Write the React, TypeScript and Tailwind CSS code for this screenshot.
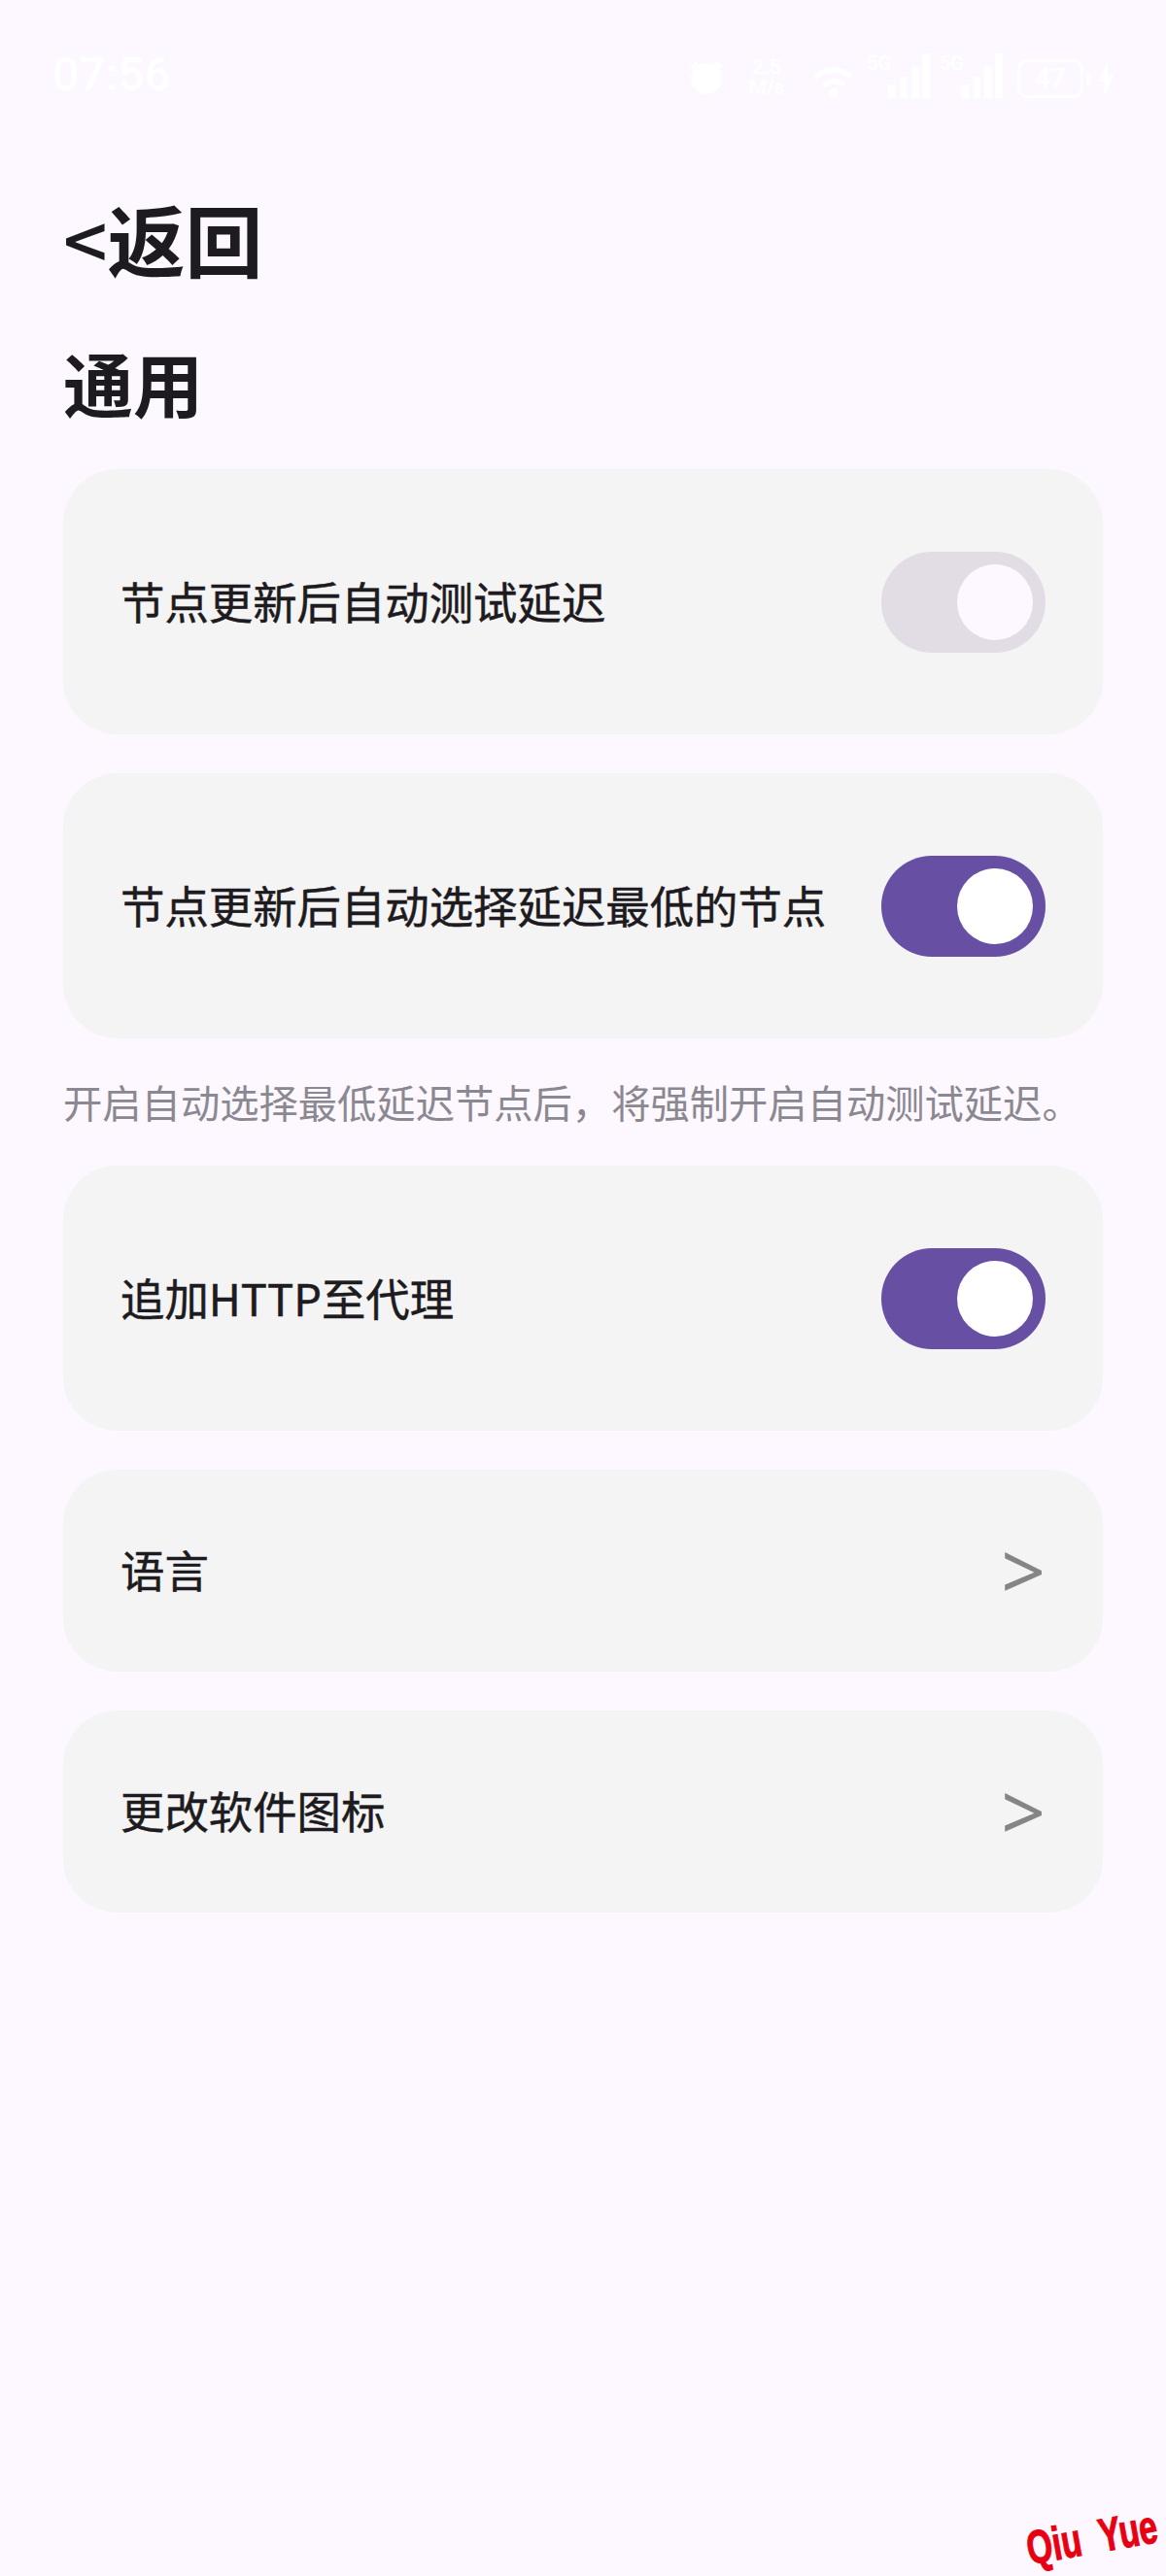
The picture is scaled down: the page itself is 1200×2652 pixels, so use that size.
import { useState } from "react"

const FONT = "font-['Noto_Sans_CJK_SC','Noto_Sans',sans-serif]"
const ROW_TEXT = "text-[45.4px] leading-none text-[#1d1b20] [-webkit-text-stroke:0.5px_#1d1b20]"

const Toggle = ({ on }: { on: boolean }) => (
  <div
    className={`flex h-[104px] w-[169px] shrink-0 items-center justify-end rounded-full pr-[13px] ${on ? "bg-[#6750a4]" : "bg-[#e2dce4]"}`}
  >
    <div className={`h-[78px] w-[78px] rounded-full ${on ? "bg-white" : "bg-[#fdf7ff]"}`} />
  </div>
)

const SwitchRow = ({ label, initial }: { label: string; initial: boolean }) => {
  const [on, setOn] = useState(initial)
  return (
    <div
      className="flex h-[273px] items-center justify-between rounded-[56px] bg-[#f4f4f4] pl-[59px] pr-[59px]"
      onClick={() => setOn(!on)}
    >
      <span className={`${ROW_TEXT} mb-[2px]`}>{label}</span>
      <Toggle on={on} />
    </div>
  )
}

const LinkRow = ({ label }: { label: string }) => (
  <div className="flex h-[208px] items-center justify-between rounded-[56px] bg-[#f4f4f4] pl-[59px] pr-[59px]">
    <span className={`${ROW_TEXT} mb-[3px]`}>{label}</span>
    <span className="mb-[2px] font-['Noto_Sans',sans-serif] text-[80px] leading-none text-[#858585]">&gt;</span>
  </div>
)

const StatusBar = () => (
  <div className="flex h-[101px] items-end justify-between pl-[54px] pr-[50px] text-white">
    <span className="font-['Roboto',sans-serif] text-[48px] font-medium leading-none">07:56</span>
    <div className="flex items-end">
      {/* alarm */}
      <svg width="38" height="42" viewBox="0 0 40 40" fill="currentColor">
        <circle cx="20" cy="21" r="17" />
        <path d="M2 8 9 2l3 3-7 6zM38 8l-7-6-3 3 7 6z" />
      </svg>
      <span className="ml-[20px] flex w-[46px] flex-col text-center font-['Roboto',sans-serif] text-[21px] font-bold leading-[21px]">
        <span>2.5</span>
        <span>M/s</span>
      </span>
      {/* wifi */}
      <svg className="ml-[25px]" width="42" height="36" viewBox="0 0 44 36" fill="none" stroke="currentColor" strokeWidth="6">
        <path d="M3 14a28 28 0 0 1 38 0M11 23a17 17 0 0 1 22 0" />
        <circle cx="22" cy="31" r="2" fill="currentColor" />
      </svg>
      {/* two sim signal blocks */}
      {["ml-[13px]", "ml-[10px]"].map((margin) => (
        <div key={margin} className={`relative h-[46px] w-[65px] ${margin}`}>
          <span className="absolute left-0 top-0 font-['Roboto',sans-serif] text-[20px] font-bold leading-none">5G</span>
          <svg className="absolute bottom-0 left-0" width="65" height="46" viewBox="0 0 65 46" fill="currentColor">
            <rect x="22" y="32" width="8" height="14" />
            <rect x="34" y="24" width="8" height="22" />
            <rect x="46" y="14" width="8" height="32" />
            <rect x="57" y="0" width="8" height="46" />
          </svg>
        </div>
      ))}
      {/* battery */}
      <div className="ml-[15px] flex items-center gap-[3px]">
        <div className="flex h-[40px] w-[68px] items-center justify-center rounded-[10px] border-[3px] border-white font-['Roboto',sans-serif] text-[28px] font-bold leading-none">
          47
        </div>
        <div className="h-[14px] w-[4px] rounded-r bg-white" />
      </div>
      <svg className="ml-[5px]" width="23" height="40" viewBox="0 0 14 36" fill="currentColor">
        <path d="M9 0 0 21h6l-2 15 10-22H8z" />
      </svg>
    </div>
  </div>
)

const App = () => (
  <div className={`relative h-[2652px] overflow-hidden bg-[#fdf7ff] ${FONT}`}>
    <StatusBar />
    <div className="px-[65px]">
      <h1 className="mt-[103px] text-[80px] font-bold leading-none text-[#1d1b20]">
        <span className="font-medium">&lt;</span>返回
      </h1>
      <h2 className="mt-[73px] text-[72px] font-bold leading-none text-[#1d1b20]">通用</h2>

      <div className="mt-[54px] flex flex-col gap-[40px]">
        <SwitchRow label="节点更新后自动测试延迟" initial={false} />
        <SwitchRow label="节点更新后自动选择延迟最低的节点" initial={true} />
      </div>
      <p className="mb-[40px] mt-[39px] text-[40.3px] leading-[52px] text-[#8a8890]">
        开启自动选择最低延迟节点后，将强制开启自动测试延迟。
      </p>
      <div className="flex flex-col gap-[40px]">
        <SwitchRow label="追加HTTP至代理" initial={true} />
        <LinkRow label="语言" />
        <LinkRow label="更改软件图标" />
      </div>
    </div>

    {/* Watermark stamp in the corner */}
    <div className="absolute bottom-[6px] left-[1057px] origin-left -rotate-[10deg] scale-x-[0.77] scale-y-[1.1] whitespace-nowrap font-['Liberation_Sans',sans-serif] text-[44px] font-bold leading-none text-[#e60012] [-webkit-text-stroke:1px_#e60012] [word-spacing:13px]">
      Qiu Yue
    </div>
  </div>
)

export default App
